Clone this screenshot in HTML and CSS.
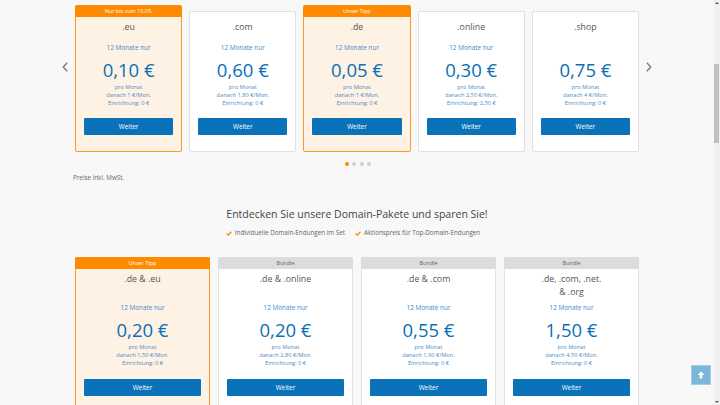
FILE: index.html
```html
<!DOCTYPE html>
<html lang="de">
<head>
<meta charset="utf-8">
<title>Domains</title>
<link rel="stylesheet" href="styles.css">
</head>
<body>
<div class="page">
  <section class="carousel">
    <div class="carousel-row">
      <button class="arrow" aria-label="Zurück">
        <svg width="7" height="12" viewBox="0 0 7 12"><path d="M6 1 L1.5 6 L6 11" fill="none" stroke="#7a7a7a" stroke-width="1.6"/></svg>
      </button>
      <div class="track">
        <div class="card card-hl">
          <div class="badge badge-float">Nur bis zum 15.05.</div>
          <div class="name">.eu</div>
          <div class="term">12 Monate nur</div>
          <div class="price">0,10 €</div>
          <div class="info">pro Monat<br>danach 1 €/Mon.<br>Einrichtung: 0 €</div>
          <button class="btn">Weiter</button>
        </div>
        <div class="card">
          <div class="name">.com</div>
          <div class="term">12 Monate nur</div>
          <div class="price">0,60 €</div>
          <div class="info">pro Monat<br>danach 1,80 €/Mon.<br>Einrichtung: 0 €</div>
          <button class="btn">Weiter</button>
        </div>
        <div class="card card-hl">
          <div class="badge badge-float">Unser Tipp</div>
          <div class="name">.de</div>
          <div class="term">12 Monate nur</div>
          <div class="price">0,05 €</div>
          <div class="info">pro Monat<br>danach 1 €/Mon.<br>Einrichtung: 0 €</div>
          <button class="btn">Weiter</button>
        </div>
        <div class="card">
          <div class="name">.online</div>
          <div class="term">12 Monate nur</div>
          <div class="price">0,30 €</div>
          <div class="info">pro Monat<br>danach 2,50 €/Mon.<br>Einrichtung: 2,50 €</div>
          <button class="btn">Weiter</button>
        </div>
        <div class="card">
          <div class="name">.shop</div>
          <div class="term term-empty">&nbsp;</div>
          <div class="price">0,75 €</div>
          <div class="info">pro Monat<br>danach 4 €/Mon.<br>Einrichtung: 0 €</div>
          <button class="btn">Weiter</button>
        </div>
      </div>
      <button class="arrow" aria-label="Weiter">
        <svg width="7" height="12" viewBox="0 0 7 12"><path d="M1 1 L5.5 6 L1 11" fill="none" stroke="#7a7a7a" stroke-width="1.6"/></svg>
      </button>
    </div>
    <div class="dots">
      <span class="dot dot-active"></span><span class="dot"></span><span class="dot"></span><span class="dot"></span>
    </div>
  </section>

  <div class="container">
    <p class="vat">Preise inkl. MwSt.</p>
  </div>

  <section class="packages">
    <h2 class="title">Entdecken Sie unsere Domain-Pakete und sparen Sie!</h2>
    <ul class="bullets">
      <li><svg width="6" height="5" viewBox="0 0 6 5"><path d="M0.6 2.6 L2.3 4.1 L5.4 0.8" fill="none" stroke="#ff8a00" stroke-width="1.3"/></svg>Individuelle Domain-Endungen im Set</li>
      <li><svg width="6" height="5" viewBox="0 0 6 5"><path d="M0.6 2.6 L2.3 4.1 L5.4 0.8" fill="none" stroke="#ff8a00" stroke-width="1.3"/></svg>Aktionspreis für Top-Domain-Endungen</li>
    </ul>
    <div class="bundles">
      <div class="card bcard card-hl">
        <div class="badge">Unser Tipp</div>
        <div class="bbody">
          <div class="name bname">.de &amp; .eu</div>
          <div class="term">12 Monate nur</div>
          <div class="price">0,20 €</div>
          <div class="info">pro Monat<br>danach 1,50 €/Mon.<br>Einrichtung: 0 €</div>
          <button class="btn">Weiter</button>
        </div>
      </div>
      <div class="card bcard">
        <div class="badge badge-gray">Bundle</div>
        <div class="bbody">
          <div class="name bname">.de &amp; .online</div>
          <div class="term">12 Monate nur</div>
          <div class="price">0,20 €</div>
          <div class="info">pro Monat<br>danach 2,80 €/Mon.<br>Einrichtung: 0 €</div>
          <button class="btn">Weiter</button>
        </div>
      </div>
      <div class="card bcard">
        <div class="badge badge-gray">Bundle</div>
        <div class="bbody">
          <div class="name bname">.de &amp; .com</div>
          <div class="term">12 Monate nur</div>
          <div class="price">0,55 €</div>
          <div class="info">pro Monat<br>danach 1,90 €/Mon.<br>Einrichtung: 0 €</div>
          <button class="btn">Weiter</button>
        </div>
      </div>
      <div class="card bcard">
        <div class="badge badge-gray">Bundle</div>
        <div class="bbody">
          <div class="name bname">.de, .com, .net.<br>&amp; .org</div>
          <div class="term">12 Monate nur</div>
          <div class="price">1,50 €</div>
          <div class="info">pro Monat<br>danach 4,50 €/Mon.<br>Einrichtung: 0 €</div>
          <button class="btn">Weiter</button>
        </div>
      </div>
    </div>
  </section>
</div>

<div class="scrollbar">
  <span class="sb-arrow sb-up"></span>
  <span class="sb-thumb"></span>
  <span class="sb-arrow sb-down"></span>
</div>

<button class="to-top" aria-label="Nach oben">
  <svg width="8" height="8" viewBox="0 0 8 8"><path d="M4 0.5 L7.5 4 L5.2 4 L5.2 7.5 L2.8 7.5 L2.8 4 L0.5 4 Z" fill="#ffffff"/></svg>
</button>
</body>
</html>
```

FILE: styles.css
```css
* { box-sizing: border-box; }

html, body {
  margin: 0;
  padding: 0;
  height: 405px;
  overflow: hidden;
}

body {
  display: flex;
  background: #f8f8f8;
  font-family: "Open Sans", "Liberation Sans", sans-serif;
  color: #555;
}

.page {
  width: 714px;
  height: 405px;
  overflow: hidden;
}

.scrollbar {
  position: relative;
  width: 6px;
  height: 405px;
  background: #f1f1f1;
  display: flex;
  flex-direction: column;
  align-items: center;
}

.sb-thumb {
  position: absolute;
  top: 64px;
  left: 0;
  width: 5px;
  height: 79px;
  background: #c1c1c1;
}

.sb-arrow {
  position: absolute;
  width: 0;
  height: 0;
  border-left: 2px solid transparent;
  border-right: 2px solid transparent;
}
.sb-up { top: 2px; border-bottom: 2px solid #505050; }
.sb-down { bottom: 2px; border-top: 2px solid #505050; }

/* carousel */
.carousel { padding-top: 11px; }

.carousel-row {
  display: flex;
  justify-content: center;
  align-items: flex-start;
  gap: 7px;
}

.arrow {
  width: 6px;
  height: 12px;
  margin-top: 50px;
  padding: 0;
  border: 0;
  background: none;
  display: flex;
  align-items: center;
  justify-content: center;
}

.track {
  width: 564px;
  display: grid;
  grid-template-columns: repeat(5, 1fr);
  gap: 7px;
}

.card {
  position: relative;
  background: #fff;
  border: 1px solid #e1e1e1;
  border-radius: 2px;
  padding: 9px 8px 16px;
  text-align: center;
}

.card-hl {
  background: #fef2e5;
  border-color: #ff9a1f;
}

.badge {
  height: 12px;
  line-height: 12px;
  font-size: 5.5px;
  color: #fff;
  background: #ff8a00;
  text-align: center;
}

.badge-float {
  position: absolute;
  top: -7px;
  left: -1px;
  right: -1px;
  border-radius: 2px 2px 0 0;
}

.badge-gray {
  background: #dcdcdc;
  color: #666;
}

.name {
  font-size: 8.8px;
  line-height: 13px;
  color: #555;
}

.term {
  margin-top: 10px;
  font-size: 6.4px;
  line-height: 8px;
  color: #3e8acb;
}

.price {
  margin-top: 7px;
  font-size: 18.5px;
  line-height: 22px;
  color: #0a6fb6;
}

.info {
  margin-top: 3px;
  font-size: 5.7px;
  line-height: 7.8px;
  color: #4d8dc6;
}

.btn {
  display: block;
  width: 100%;
  height: 17px;
  margin-top: 11px;
  padding: 0;
  border: 0;
  border-radius: 1px;
  background: #0a72b9;
  color: #fff;
  font-family: "Open Sans", "Liberation Sans", sans-serif;
  font-size: 6.4px;
  line-height: 17px;
}

.dots {
  display: flex;
  justify-content: center;
  gap: 3.5px;
  margin-top: 10px;
  padding-left: 2px;
}

.dot {
  width: 4px;
  height: 4px;
  border-radius: 50%;
  background: #cfcfcf;
}

.dot-active { background: #ff8a00; }

.container {
  width: 564px;
  margin: 0 auto;
}

.vat {
  margin: 8px 0 0 -2px;
  font-size: 6.3px;
  line-height: 8px;
  color: #666;
}

/* packages */
.packages {
  width: 564px;
  margin: 0 auto;
}

.title {
  margin: 25px 0 0;
  font-size: 10.5px;
  line-height: 14px;
  font-weight: 400;
  color: #444;
  text-align: center;
}

.bullets {
  list-style: none;
  margin: 8px 0 0;
  padding: 0 8px 0 0;
  display: flex;
  justify-content: center;
  gap: 10px;
  font-size: 6.3px;
  line-height: 8px;
  color: #666;
}

.bullets li {
  display: flex;
  align-items: center;
  gap: 3px;
}

.bundles {
  margin-top: 20px;
  display: grid;
  grid-template-columns: repeat(4, 1fr);
  gap: 8px;
}

.bcard {
  padding: 0;
  border-top: 0;
}

.bcard .badge {
  margin: 0 -1px;
  border-radius: 2px 2px 0 0;
}

.bbody {
  padding: 4px 8px 15px;
}

.bname {
  min-height: 26px;
}

.bcard .term { margin-top: 5px; }

.to-top {
  position: fixed;
  right: 9px;
  bottom: 20px;
  width: 20px;
  height: 20px;
  padding: 0;
  border: 1px solid #a3cce6;
  background: #7db6db;
  display: flex;
  align-items: center;
  justify-content: center;
}
```
